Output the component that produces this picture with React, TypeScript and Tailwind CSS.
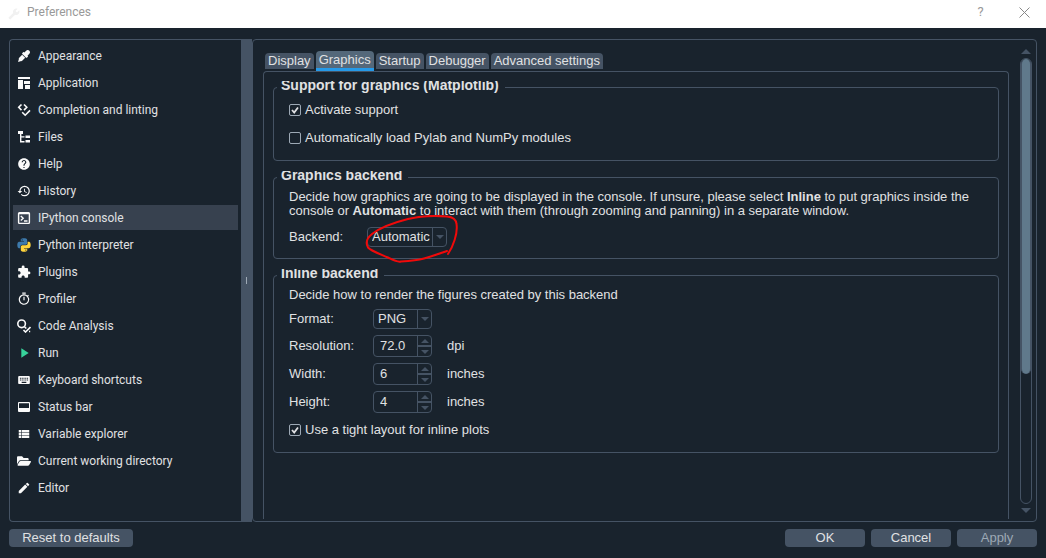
import React from 'react';
import { MdHelp, MdHistory, MdExtension, MdOutlineTimer, MdPlayArrow, MdKeyboard, MdViewList, MdEdit, MdBuild } from 'react-icons/md';
import { FaEyeDropper, FaFolderOpen } from 'react-icons/fa';

interface SectionItem {
  label: string;
  icon: React.ReactNode;
}

const LayoutIcon: React.FC = () => (
  <svg className="size-3.5" viewBox="0 0 14 14" fill="currentColor">
    <path d="M1 1h12v2H1zM1 4h5v9H1zM7 5h6v3H7zM8 9h5v4H8z" />
  </svg>
);

const LintIcon: React.FC = () => (
  <svg className="size-3.5" viewBox="0 0 14 14" fill="none" stroke="currentColor" strokeWidth={1.6}>
    <path d="M4.5 1.5L1.7 4.3l2.800 2.800M7 1.500l2.800 2.800L7 7.100M5.200 9.200l3 3L13 7.400" />
  </svg>
);

const TreeIcon: React.FC = () => (
  <svg className="size-3.5" viewBox="0 0 14 14" fill="currentColor">
    <path d="M1 1h5v3H1zM3 4h1.400v8.500H3zM3 6.200h4.500v1.400H3zM3 11.100h4.500v1.400H3zM8.500 5.500H13V8H8.500zM8.500 10H13v2.500H8.500z" />
  </svg>
);

const ConsoleIcon: React.FC = () => (
  <svg className="size-3.5" viewBox="0 0 14 14" fill="none" stroke="currentColor" strokeWidth={1.4}>
    <rect x="1.6" y="1.6" width="10.8" height="10.8" rx="0.8" />
    <path d="M1.5 2.6h11M3.8 5l2.4 2.3-2.4 2.3M7 10h3.500" />
  </svg>
);

const PythonIcon: React.FC = () => (
  <svg className="size-3.5" viewBox="1 1 22 22">
    <path
      fill="#3d7aac"
      d="M11.9 1.5c-5.3 0-5 2.3-5 2.3v2.4H12v.7H4.9S1.5 6.500 1.500 11.900s3 5.100 3 5.100h1.800v-2.500s-.1-3 2.900-3h5s2.800.05 2.800-2.700V4.200s.4-2.700-5.100-2.700zM9.100 3.100a.9.9 0 1 1 0 1.800.9.9 0 0 1 0-1.800z"
    />
    <path
      fill="#ffd43b"
      d="M12.100 22.500c5.300 0 5-2.300 5-2.300v-2.400H12v-.7h7.100s3.400.4 3.400-5-3-5.100-3-5.100h-1.800v2.500s.1 3-2.900 3h-5s-2.800-.05-2.800 2.700v4.600s-.4 2.700 5.100 2.700zm2.800-1.600a.9.9 0 1 1 0-1.800.9.9 0 0 1 0 1.800z"
    />
  </svg>
);

const AnalysisIcon: React.FC = () => (
  <svg className="size-3.5" viewBox="0 0 14 14" fill="none" stroke="currentColor" strokeWidth={1.6}>
    <circle cx="4.600" cy="4.800" r="3.800" />
    <path d="M7.300 7.500l2 2M6.500 11l2 2 5-5" />
    <path d="M12 12.500h1.200" />
  </svg>
);

const StatusBarIcon: React.FC = () => (
  <svg className="size-3.5" viewBox="0 0 14 14" fill="currentColor">
    <path d="M2 2h10a1 1 0 0 1 1 1v8a1 1 0 0 1-1 1H2a1 1 0 0 1-1-1V3a1 1 0 0 1 1-1zm0 1.200V8h10V3.200z" />
  </svg>
);

const sections: SectionItem[] = [
  { label: 'Appearance', icon: <FaEyeDropper className="size-3" /> },
  { label: 'Application', icon: <LayoutIcon /> },
  { label: 'Completion and linting', icon: <LintIcon /> },
  { label: 'Files', icon: <TreeIcon /> },
  { label: 'Help', icon: <MdHelp className="size-3.5" /> },
  { label: 'History', icon: <MdHistory className="size-3.5" /> },
  { label: 'IPython console', icon: <ConsoleIcon /> },
  { label: 'Python interpreter', icon: <PythonIcon /> },
  { label: 'Plugins', icon: <MdExtension className="size-3.5" /> },
  { label: 'Profiler', icon: <MdOutlineTimer className="size-3.5" /> },
  { label: 'Code Analysis', icon: <AnalysisIcon /> },
  { label: 'Run', icon: <MdPlayArrow className="size-4 text-[#37d39b]" /> },
  { label: 'Keyboard shortcuts', icon: <MdKeyboard className="size-3.5" /> },
  { label: 'Status bar', icon: <StatusBarIcon /> },
  { label: 'Variable explorer', icon: <MdViewList className="size-3.5" /> },
  { label: 'Current working directory', icon: <FaFolderOpen className="size-3.5" /> },
  { label: 'Editor', icon: <MdEdit className="size-3.5" /> },
];

const tabs = ['Display', 'Graphics', 'Startup', 'Debugger', 'Advanced settings'];

const Arrow: React.FC<{ up?: boolean; large?: boolean }> = ({ up, large }) => (
  <svg className={large ? 'h-[5px] w-[10px]' : 'h-1 w-2'} viewBox="0 0 10 5" preserveAspectRatio="none" fill="#455364">
    <path d={up ? 'M0 5l5-5 5 5z' : 'M0 0h10L5 5z'} />
  </svg>
);

const Group: React.FC<{ title: string; children: React.ReactNode }> = ({ title, children }) => (
  <fieldset className="rounded border border-[#455364] px-[15px]">
    <legend className="-ml-3 h-3 overflow-hidden pr-1.5 pl-1 text-[14px] leading-2 font-bold">{title}</legend>
    {children}
  </fieldset>
);

const Check: React.FC<{ label: string; checked?: boolean }> = ({ label, checked }) => (
  <label className="flex h-4 items-center gap-1">
    <span className="relative flex size-3">
      <input
        type="checkbox"
        defaultChecked={checked}
        className="peer size-3 appearance-none rounded-xs border border-[#9da9b5]"
      />
      <svg
        className="pointer-events-none absolute inset-0 hidden size-3 peer-checked:block"
        viewBox="0 0 12 12"
        fill="none"
        stroke="currentColor"
        strokeWidth={1.800}
      >
        <path d="M3 6l2.200 2.500L9 3.500" />
      </svg>
    </span>
    {label}
  </label>
);

const Combo: React.FC<{ id: string; value: string; options: string[]; width: string }> = ({ id, value, options, width }) => (
  <div className={`relative flex h-5 rounded-sm border border-[#455364] ${width}`}>
    <select id={id} defaultValue={value} className="w-full appearance-none bg-transparent pr-4 pl-1 leading-4 outline-none">
      {options.map((o) => (
        <option key={o}>{o}</option>
      ))}
    </select>
    <span className="pointer-events-none absolute inset-y-0 right-0 flex w-3.5 items-center justify-center border-l border-[#455364]">
      <Arrow />
    </span>
  </div>
);

const Spin: React.FC<{ id: string; label: string; value: string; unit: string }> = ({ id, label, value, unit }) => (
  <div className="flex h-[22px] items-center">
    <label htmlFor={id} className="w-[84px]">{label}</label>
    <div className="flex h-full w-[59px] rounded-sm border border-[#455364]">
      <input id={id} defaultValue={value} className="w-full min-w-0 bg-transparent pl-1.5 outline-none" />
      <div className="flex w-3.5 shrink-0 flex-col border-l border-[#455364]">
        <button type="button" aria-label={`Increase ${label}`} className="flex flex-1 items-center justify-center border-b border-[#455364]">
          <Arrow up />
        </button>
        <button type="button" aria-label={`Decrease ${label}`} className="flex flex-1 items-center justify-center border-t border-[#455364]">
          <Arrow />
        </button>
      </div>
    </div>
    <span className="ml-[15px]">{unit}</span>
  </div>
);

const Sidebar: React.FC = () => (
  <nav className="w-[232px] shrink-0 rounded-l border border-r-0 border-[#455364] p-[3px] font-[Roboto,sans-serif] text-[12px]">
    <ul className="flex flex-col gap-0.5">
      {sections.map((s) => (
        <li key={s.label}>
          <button
            type="button"
            className={`flex h-[25px] w-full items-center gap-1.5 pl-[3px] text-left ${s.label === 'IPython console' ? 'bg-[#37414f]' : ''}`}
          >
            <span className="flex size-4 items-center justify-center text-[#fafafa]">{s.icon}</span>
            {s.label}
          </button>
        </li>
      ))}
    </ul>
  </nav>
);

const GraphicsPage: React.FC = () => (
  <div className="flex flex-1 flex-col gap-2.5 rounded-t border border-b-0 border-[#455364] p-[9px]">
    <Group title="Support for graphics (Matplotlib)">
      <div className="flex flex-col gap-3 pt-[9px] pb-3.5">
        <Check label="Activate support" checked />
        <Check label="Automatically load Pylab and NumPy modules" />
      </div>
    </Group>

    <Group title="Graphics backend">
      <p className="pt-[7px] leading-3.5">
        Decide how graphics are going to be displayed in the console. If unsure, please select <b>Inline</b> to put graphics inside the
        <br />
        console or <b>Automatic</b> to interact with them (through zooming and panning) in a separate window.
      </p>
      <div className="flex items-center pt-[9px] pb-[11px]">
        <label htmlFor="backend" className="w-[78px]">Backend:</label>
        <div className="relative">
          <Combo id="backend" value="Automatic" options={['Automatic', 'Inline', 'Qt5', 'Tkinter']} width="w-[80px]" />
          {/* hand-drawn marker around the backend selector */}
          <svg
            className="pointer-events-none absolute -top-3 -left-1 h-[50px] w-[96px]"
            viewBox="363 215 96 50"
            fill="none"
            stroke="#f00a0a"
            strokeWidth={2}
            strokeLinecap="round"
            strokeLinejoin="round"
          >
            <path d="M448 254C453 247 458 233 456.500 224C456 219 453 217 447 216.500C436 215.500 420 216 408 219C396 222 381 227 372 234C367 238 365.500 243 368 247.500C371 251 380 254 388 257.500C393 260 397 262.500 401 261.500C410 261 417 260.500 424 258.500C433 256 441 253 447 251" />
          </svg>
        </div>
      </div>
    </Group>

    <Group title="Inline backend">
      <p className="pt-[7px] leading-3.5">Decide how to render the figures created by this backend</p>
      <div className="flex flex-col gap-1.5 pt-[7px]">
        <div className="flex items-center">
          <label htmlFor="format" className="w-[84px]">Format:</label>
          <Combo id="format" value="PNG" options={['PNG', 'SVG']} width="w-[59px]" />
        </div>
        <Spin id="resolution" label="Resolution:" value="72.0" unit="dpi" />
        <Spin id="width" label="Width:" value="6" unit="inches" />
        <Spin id="height" label="Height:" value="4" unit="inches" />
      </div>
      <div className="pt-[9px] pb-3.5">
        <Check label="Use a tight layout for inline plots" checked />
      </div>
    </Group>
  </div>
);

const App: React.FC = () => (
  <div className="flex min-h-screen flex-col bg-[#19232d] font-['Liberation_Sans',sans-serif] text-[13px] leading-4 text-[#e0e1e3]">
    <header className="flex h-7 items-center bg-white pl-2 font-[Roboto,sans-serif] text-[12px] text-[#999]">
      <MdBuild className="size-3 -scale-x-100 text-[#f1f1f1]" />
      <h1 className="ml-[7px] flex-1 pb-1">Preferences</h1>
      <button type="button" aria-label="Help" className="h-full w-[45px] pb-1 text-[13px]">?</button>
      <button type="button" aria-label="Close" className="flex h-full w-[43px] items-center justify-center pb-1">
        <svg className="size-[11px]" viewBox="0 0 11 11" stroke="#888" strokeWidth={1}>
          <path d="M.5.5l10 10M10.500.5l-10 10" />
        </svg>
      </button>
    </header>

    <main className="flex flex-1 px-[9px] pt-[11px]">
      <Sidebar />
      <div className="flex w-[11px] shrink-0 items-center justify-center bg-[#455364]">
        <span className="h-[7px] w-px bg-[#9da9b5]" />
      </div>

      <section className="flex min-w-0 flex-1 rounded border border-[#455364] pt-[11px] pr-1 pb-0.5 pl-2.5">
        <div className="flex min-w-0 flex-1 flex-col">
          <div role="tablist" className="flex h-5 items-end gap-0.5 pl-0.5">
            {tabs.map((t) =>
              t === 'Graphics' ? (
                <button key={t} type="button" role="tab" aria-selected className="h-5 rounded-t border-b-3 border-[#259ae9] bg-[#54687a] px-[3px]">
                  {t}
                </button>
              ) : (
                <button key={t} type="button" role="tab" className="mb-0.5 h-4 rounded-t bg-[#455364] px-[3px]">
                  {t}
                </button>
              ),
            )}
          </div>
          <GraphicsPage />
        </div>

        <div className="-mt-0.5 ml-[11px] flex w-3 flex-col items-center gap-1 pb-1.5">
          <Arrow up large />
          <div className="w-full flex-1 rounded-md border border-[#455364]">
            <div className="h-[71%] rounded-md border-x border-[#455364] bg-[#60798b]" />
          </div>
          <Arrow large />
        </div>
      </section>
    </main>

    <footer className="flex gap-1.5 px-[9px] pt-[7px] pb-[11px]">
      <button type="button" className="mr-auto h-[18px] w-[124px] rounded bg-[#455364]">Reset to defaults</button>
      <button type="button" className="h-[18px] w-20 rounded bg-[#455364]">OK</button>
      <button type="button" className="h-[18px] w-20 rounded bg-[#455364]">Cancel</button>
      <button type="button" disabled className="h-[18px] w-20 rounded bg-[#455364] text-[#9da9b5]">Apply</button>
    </footer>
  </div>
);

export default App;
